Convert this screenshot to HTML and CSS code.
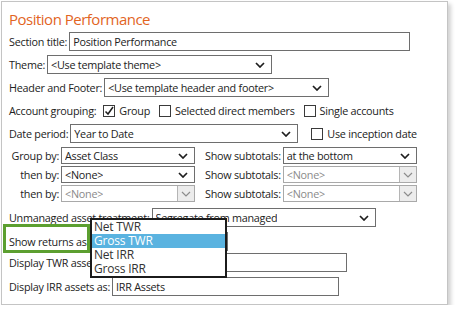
FILE: index.html
```html
<!DOCTYPE html>
<html lang="en">
<head>
  <meta charset="UTF-8">
  <title>Position Performance</title>
  <link rel="stylesheet" href="styles.css">
</head>
<body>
  <div class="panel">
    <h1>Position Performance</h1>

    <div class="form">
      <div class="row">
        <label>Section title:</label>
        <input class="text w-title" type="text" value="Position Performance">
      </div>

      <div class="row">
        <label>Theme:</label>
        <div class="select w-225"><span>&lt;Use template theme&gt;</span><svg class="chev" viewBox="0 0 10 6"><path d="M1 1l4 4 4-4"/></svg></div>
      </div>

      <div class="row">
        <label>Header and Footer:</label>
        <div class="select w-225"><span>&lt;Use template header and footer&gt;</span><svg class="chev" viewBox="0 0 10 6"><path d="M1 1l4 4 4-4"/></svg></div>
      </div>

      <div class="row">
        <label>Account grouping:</label>
        <span class="check checked"><svg viewBox="0 0 10 10"><path d="M1.5 5.5l2.5 2.5 5-7"/></svg></span>
        <span class="opt">Group</span>
        <span class="check"></span>
        <span class="opt">Selected direct members</span>
        <span class="check"></span>
        <span class="opt">Single accounts</span>
      </div>

      <div class="row">
        <label>Date period:</label>
        <div class="select w-date"><span>Year to Date</span><svg class="chev" viewBox="0 0 10 6"><path d="M1 1l4 4 4-4"/></svg></div>
        <span class="check spaced"></span>
        <span class="opt">Use inception date</span>
      </div>

      <div class="group">
        <div class="row">
          <label class="by">Group by:</label>
          <div class="select w-134"><span>Asset Class</span><svg class="chev" viewBox="0 0 10 6"><path d="M1 1l4 4 4-4"/></svg></div>
          <label class="sub">Show subtotals:</label>
          <div class="select w-134"><span>at the bottom</span><svg class="chev" viewBox="0 0 10 6"><path d="M1 1l4 4 4-4"/></svg></div>
        </div>
        <div class="row">
          <label class="by">then by:</label>
          <div class="select w-134"><span>&lt;None&gt;</span><svg class="chev" viewBox="0 0 10 6"><path d="M1 1l4 4 4-4"/></svg></div>
          <label class="sub">Show subtotals:</label>
          <div class="select w-134 disabled"><span>&lt;None&gt;</span><i class="btn"><svg class="chev" viewBox="0 0 10 6"><path d="M1 1l4 4 4-4"/></svg></i></div>
        </div>
        <div class="row">
          <label class="by">then by:</label>
          <div class="select w-134 disabled"><span>&lt;None&gt;</span><i class="btn"><svg class="chev" viewBox="0 0 10 6"><path d="M1 1l4 4 4-4"/></svg></i></div>
          <label class="sub">Show subtotals:</label>
          <div class="select w-134 disabled"><span>&lt;None&gt;</span><i class="btn"><svg class="chev" viewBox="0 0 10 6"><path d="M1 1l4 4 4-4"/></svg></i></div>
        </div>
      </div>

      <div class="row r-unmanaged">
        <label>Unmanaged asset treatment:</label>
        <div class="select w-224"><span>Segregate from managed</span><svg class="chev" viewBox="0 0 10 6"><path d="M1 1l4 4 4-4"/></svg></div>
      </div>

      <div class="row r-returns">
        <label>Show returns as:</label>
        <div class="select w-returns"><span></span><svg class="chev" viewBox="0 0 10 6"><path d="M1 1l4 4 4-4"/></svg></div>
      </div>

      <div class="row r-twr">
        <label>Display TWR assets as:</label>
        <input class="text w-twr" type="text" value="TWR Assets">
      </div>

      <div class="row r-irr">
        <label>Display IRR assets as:</label>
        <input class="text w-irr" type="text" value="IRR Assets">
      </div>
    </div>

    <div class="highlight"></div>

    <ul class="dropdown">
      <li>Net TWR</li>
      <li class="active">Gross TWR</li>
      <li>Net IRR</li>
      <li>Gross IRR</li>
    </ul>
  </div>
</body>
</html>
```

FILE: styles.css
```css
body {
  margin: 0;
  background: #fff;
  font-family: "Open Sans", "Noto Sans", sans-serif;
  font-size: 10.8px;
  letter-spacing: -0.25px;
  color: #222;
}
.panel {
  position: relative;
  box-sizing: border-box;
  width: 447px;
  height: 304px;
  margin: 1px 0 0 1px;
  padding: 0 0 0 7px;
  border: 1px solid #c4c4c4;
  box-shadow: 3px 3px 4px rgba(0,0,0,0.18);
}
h1 {
  margin: 5px 0 0;
  font-size: 15px;
  letter-spacing: -0.5px;
  line-height: 24px;
  font-weight: normal;
  color: #e2651f;
}
.form {
  display: flex;
  flex-direction: column;
  gap: 4px;
  margin-top: 1px;
}
.row {
  display: flex;
  align-items: center;
  height: 19px;
  white-space: nowrap;
}
.row label {
  margin-right: 2px;
}
.text,
.select {
  box-sizing: border-box;
  height: 19px;
  border: 1px solid #6e6e6e;
  background: #fff;
  font: inherit;
  letter-spacing: inherit;
  color: #222;
  padding: 0 3px;
}
.select {
  display: flex;
  align-items: center;
  justify-content: space-between;
  overflow: hidden;
}
.select span {
  overflow: hidden;
}
.chev {
  flex: none;
  width: 10px;
  height: 6px;
  margin-right: 3px;
  fill: none;
  stroke: #1e1e1e;
  stroke-width: 1.7;
}
.select.disabled {
  border-color: #a9a9a9;
  color: #8a8a8a;
  padding-right: 0;
}
.select.disabled .btn {
  display: flex;
  align-items: center;
  justify-content: center;
  width: 16px;
  height: 100%;
  border-left: 1px solid #b5b5b5;
  background: #ececec;
}
.select.disabled .chev {
  margin: 0;
  stroke: #8c8c8c;
  stroke-width: 1.2;
}

.w-title { width: 341px; }
.w-225 { width: 225px; }
.w-date { width: 228px; }
.w-134 { width: 134px; }
.w-224 { width: 224px; }
.w-returns { width: 137px; }
.w-twr { width: 229px; }
.w-irr { width: 227px; }

.check {
  box-sizing: border-box;
  width: 12px;
  height: 12px;
  margin: 0 4px 0 5px;
  border: 1px solid #3a3a3a;
  background: #fff;
}
.check svg {
  display: block;
  width: 10px;
  height: 10px;
  fill: none;
  stroke: #1e1e1e;
  stroke-width: 1.5;
}
.check + .opt + .check {
  margin-left: 9px;
}
.check.spaced {
  margin-left: 13px;
}

.group {
  display: flex;
  flex-direction: column;
  gap: 2px;
}
.group .row,
.group .select {
  height: 17px;
}
.row label.by {
  width: 50px;
  text-align: right;
}
.row label.sub {
  margin-left: 10px;
}
.r-unmanaged { margin-top: 2px; }
.r-returns { margin-top: 1px; }
.r-twr { margin-top: -2px; }
.r-irr { margin-top: 1px; }

.highlight {
  position: absolute;
  left: 1px;
  top: 222px;
  width: 81px;
  height: 23px;
  border: 3px solid #5c9f30;
}
.dropdown {
  position: absolute;
  left: 88px;
  top: 216px;
  width: 133px;
  margin: 0;
  padding: 0;
  list-style: none;
  border: 2px solid #1b1b1b;
  background: #fff;
  font-size: 12px;
  letter-spacing: -0.2px;
}
.dropdown li {
  height: 14px;
  line-height: 14px;
  padding-left: 2px;
  color: #333;
}
.dropdown li.active {
  background: #5ab3e0;
  color: #fff;
}
```
